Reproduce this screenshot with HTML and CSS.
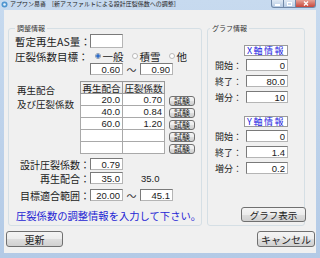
FILE: index.html
```html
<!DOCTYPE html>
<html lang="ja">
<head>
  <meta charset="UTF-8">
  <meta name="viewport" content="width=device-width, initial-scale=1.0">
  <title>アプワン易審</title>
  <link rel="stylesheet" href="styles.css">
</head>
<body>

<div class="window">
  <div class="titlebar">
    <svg class="app-icon" width="7" height="7" viewBox="0 0 7 7">
      <circle cx="3.5" cy="3.5" r="3" fill="#4f95d0"/>
      <circle cx="3.5" cy="3.5" r="1.3" fill="#e6f1fa"/>
    </svg>
    <span class="title">アプワン易審　[新アスファルトによる設計圧裂係数への調整]</span>
    <div class="caption-buttons">
      <span class="cap-btn cap-min"><span class="bar"></span></span>
      <span class="cap-btn cap-max"><span class="box"></span></span>
      <span class="cap-btn cap-close">
        <svg width="6" height="5" viewBox="0 0 6 5"><path d="M1 0.5 L5 4.5 M5 0.5 L1 4.5" stroke="#fff" stroke-width="1.3"/></svg>
      </span>
    </div>
  </div>

  <div class="client">
    <div class="groups">
      <fieldset class="group group-adjust">
        <legend>調整情報</legend>

        <div class="row row-as">
          <label class="lbl lbl-big">暫定再生AS量：</label>
          <input class="field" type="text" value="">
        </div>

        <div class="row row-target">
          <label class="lbl lbl-big">圧裂係数目標：</label>
          <div class="radios">
            <span class="radio"><span class="dot checked"></span>一般</span>
            <span class="radio"><span class="dot"></span>積雪</span>
            <span class="radio"><span class="dot"></span>他</span>
          </div>
        </div>

        <div class="row row-range">
          <input class="field" type="text" value="0.60">
          <span class="tilde">～</span>
          <input class="field" type="text" value="0.90">
        </div>

        <div class="mix">
          <div class="mix-label">
            <div>再生配合</div>
            <div>及び圧裂係数</div>
          </div>
          <table class="mix-table">
            <thead>
              <tr><th>再生配合</th><th>圧裂係数</th></tr>
            </thead>
            <tbody>
              <tr><td>20.0</td><td>0.70</td></tr>
              <tr><td>40.0</td><td>0.84</td></tr>
              <tr><td>60.0</td><td>1.20</td></tr>
              <tr><td></td><td></td></tr>
              <tr><td></td><td></td></tr>
            </tbody>
          </table>
          <div class="tests">
            <button class="btn btn-test">試験</button>
            <button class="btn btn-test">試験</button>
            <button class="btn btn-test">試験</button>
            <button class="btn btn-test">試験</button>
            <button class="btn btn-test">試験</button>
          </div>
        </div>

        <div class="row row-design">
          <label class="lbl">設計圧裂係数：</label>
          <input class="field" type="text" value="0.79">
        </div>

        <div class="row row-mix">
          <label class="lbl">再生配合：</label>
          <input class="field" type="text" value="35.0">
          <span class="plain">35.0</span>
        </div>

        <div class="row row-fit">
          <label class="lbl">目標適合範囲：</label>
          <input class="field" type="text" value="20.00">
          <span class="tilde">～</span>
          <input class="field" type="text" value="45.1">
        </div>

        <p class="message">圧裂係数の調整情報を入力して下さい。</p>
      </fieldset>

      <fieldset class="group group-graph">
        <legend>グラフ情報</legend>

        <div class="axis-title axis-x">X軸情報</div>
        <div class="axis-row"><label class="axis-lbl">開始：</label><input class="field axis-field" type="text" value="0"></div>
        <div class="axis-row"><label class="axis-lbl">終了：</label><input class="field axis-field" type="text" value="80.0"></div>
        <div class="axis-row"><label class="axis-lbl">増分：</label><input class="field axis-field" type="text" value="10"></div>

        <div class="axis-title axis-y">Y軸情報</div>
        <div class="axis-row"><label class="axis-lbl">開始：</label><input class="field axis-field" type="text" value="0"></div>
        <div class="axis-row"><label class="axis-lbl">終了：</label><input class="field axis-field" type="text" value="1.4"></div>
        <div class="axis-row"><label class="axis-lbl">増分：</label><input class="field axis-field" type="text" value="0.2"></div>

        <button class="btn btn-graph">グラフ表示</button>
      </fieldset>
    </div>

    <div class="footer">
      <button class="btn btn-update">更新</button>
      <button class="btn btn-cancel">キャンセル</button>
    </div>
  </div>
</div>

</body>
</html>
```

FILE: styles.css
```css
* {
  box-sizing: border-box;
}

body {
  margin: 0;
  font-family: "Noto Sans CJK JP", "Noto Sans", sans-serif;
  color: #1b1b1b;
  background: #b9d0ea;
}

.window {
  width: 320px;
  height: 258px;
  display: flex;
  flex-direction: column;
  padding: 0 4px 5px;
  background: linear-gradient(#c7daef, #b3cae6);
  overflow: hidden;
}

/* title bar */
.titlebar {
  height: 10px;
  margin: 0 -4px;
  display: flex;
  align-items: flex-start;
}

.app-icon {
  margin: 1px 0 0 1px;
}

.title {
  margin-left: 2px;
  font-size: 6px;
  line-height: 8px;
  color: #222;
  white-space: nowrap;
}

.caption-buttons {
  margin-left: auto;
  margin-right: 4px;
  display: flex;
}

.cap-btn {
  height: 8px;
  display: flex;
  align-items: center;
  justify-content: center;
  border: 1px solid #7088a8;
  border-top: none;
}

.cap-min {
  width: 13px;
  border-radius: 0 0 0 3px;
  background: linear-gradient(#dfe9f5, #b7cbe3);
}

.cap-max {
  width: 12px;
  border-left: none;
  background: linear-gradient(#dfe9f5, #b7cbe3);
}

.cap-close {
  width: 20px;
  border-left: none;
  border-radius: 0 0 3px 0;
  background: linear-gradient(#e6a196, #c7463a);
}

.cap-min .bar {
  width: 5px;
  height: 2px;
  margin-top: 2px;
  background: #fff;
}

.cap-max .box {
  width: 5px;
  height: 4px;
  border: 1px solid #fff;
}

/* client area */
.client {
  flex: 1;
  display: flex;
  flex-direction: column;
  padding-left: 2px;
  background: #f0f0f0;
}

.groups {
  display: flex;
  gap: 5px;
  margin: 14px 0 0 2px;
}

.group {
  margin: 0;
  height: 202px;
  min-width: 0;
  border: 1px solid #d5dfe5;
  border-radius: 3px;
}

.group legend {
  padding: 0 2px;
  font-size: 7px;
  line-height: 8px;
  color: #333;
}

.group-adjust {
  width: 194px;
  padding: 2px 6px 0;
}

.group-graph {
  width: 98px;
  padding: 0 0 0 2px;
  display: flex;
  flex-direction: column;
}

/* form rows */
.row {
  display: flex;
  align-items: center;
  height: 12px;
  font-size: 10px;
}

.lbl {
  width: 75px;
  text-align: right;
  white-space: nowrap;
}

.lbl-big {
  font-size: 10.5px;
}

.field {
  width: 33px;
  height: 12px;
  padding: 0 2px 0 0;
  border: 1px solid #7a7a7a;
  border-right-color: #b5b5b5;
  border-bottom-color: #b5b5b5;
  background: #fff;
  font-family: "Liberation Sans", Arial, sans-serif;
  font-size: 9.5px;
  color: #1b1b1b;
  text-align: right;
  outline: none;
}

.row-as {
  height: 14px;
}

.row-as .field {
  height: 14px;
}

.row-target {
  margin-top: 2px;
}

.radios {
  display: flex;
  margin-left: 4px;
}

.radio {
  width: 37px;
  display: flex;
  align-items: center;
  gap: 2px;
  padding-left: 2px;
  font-size: 10.5px;
}

.dot {
  width: 6px;
  height: 6px;
  border-radius: 50%;
  border: 1px solid #b9b9b9;
  background: #fff;
}

.dot.checked {
  border-color: #8a9bb0;
  background: radial-gradient(circle, #2d6ccc 55%, #fff 60%);
}

.row-range {
  margin: 1px 0 0 75px;
}

.tilde {
  width: 17px;
  text-align: center;
  font-size: 10px;
  color: #333;
}

/* mix table */
.mix {
  display: flex;
  margin-top: 6px;
  height: 73px;
}

.mix-label {
  width: 66px;
  padding: 2px 0 0 2px;
  font-size: 9.5px;
  line-height: 14px;
}

.mix-table {
  width: 86px;
  table-layout: fixed;
  border-collapse: collapse;
  align-self: flex-start;
}

.mix-table th {
  height: 12px;
  padding: 0;
  border: 1px solid #999;
  background: linear-gradient(#f7f7f7, #e4e4e4);
  font-weight: normal;
  font-size: 9.5px;
  line-height: 10px;
  white-space: nowrap;
}

.mix-table td {
  height: 12px;
  padding: 0 2px 0 0;
  border: 1px solid #a9a9a9;
  background: #fff;
  font-family: "Liberation Sans", Arial, sans-serif;
  font-size: 9.5px;
  line-height: 10px;
  text-align: right;
}

.tests {
  display: flex;
  flex-direction: column;
  gap: 2px;
  margin: 15px 0 0 4px;
}

/* buttons */
.btn {
  padding: 0;
  border: 1px solid #707070;
  border-radius: 3px;
  background: linear-gradient(#f4f4f4 0%, #ececec 50%, #dedede 51%, #d0d0d0 100%);
  font-family: "Noto Sans CJK JP", "Noto Sans", sans-serif;
  color: #1b1b1b;
  cursor: pointer;
}

.btn-test {
  width: 26px;
  height: 10px;
  font-size: 8px;
  line-height: 8px;
}

.row-design {
  margin-top: 4px;
}

.row-mix {
  margin-top: 2px;
}

.plain {
  margin-left: 18px;
  font-family: "Liberation Sans", Arial, sans-serif;
  font-size: 9.5px;
}

.row-fit {
  margin-top: 5px;
}

.message {
  margin: 9px 0 0 1px;
  font-size: 10.3px;
  line-height: 12px;
  color: #2424d4;
  white-space: nowrap;
}

/* graph group */
.axis-title {
  width: 44px;
  height: 11px;
  margin-left: 34px;
  border: 1px solid #9a9a9a;
  background: #fff;
  color: #2020e0;
  font-size: 9px;
  line-height: 9px;
  letter-spacing: 1.5px;
  text-align: center;
}

.axis-x {
  margin-top: 13px;
}

.axis-y {
  margin-top: 13px;
}

.axis-row {
  display: flex;
  align-items: center;
  height: 12px;
  margin: 4px 0 0 5px;
}

.axis-title + .axis-row {
  margin-top: 3px;
}

.axis-lbl {
  width: 31px;
  font-size: 9px;
  white-space: nowrap;
}

.axis-field {
  width: 42px;
}

.btn-graph {
  width: 65px;
  height: 15px;
  margin: auto 0 3px 31px;
  font-size: 9.5px;
}

/* bottom buttons */
.footer {
  display: flex;
  justify-content: space-between;
  margin: 5px 1px 0 0;
}

.btn-update,
.btn-cancel {
  height: 16px;
  font-size: 10px;
}

.btn-update {
  width: 57px;
}

.btn-cancel {
  width: 58px;
}
```
